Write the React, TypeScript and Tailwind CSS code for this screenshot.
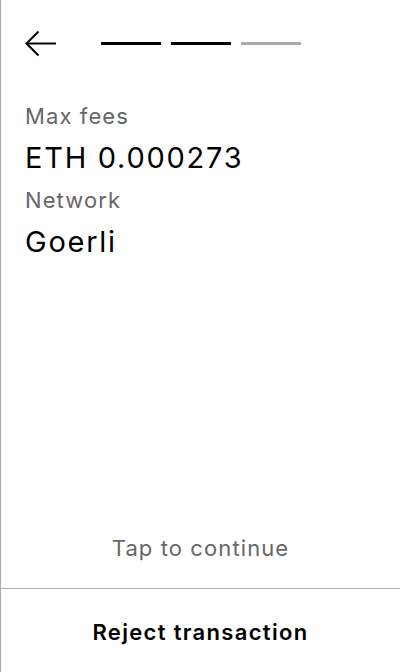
import React from 'react';

const font = { fontFamily: 'Inter, "Noto Sans", sans-serif' };

const Row = ({ label, value }: { label: string; value: string }) => (
  <>
    <div className="text-[22px] leading-[42px] tracking-[0.05em] text-[#666666]">{label}</div>
    <div className="text-[29px] leading-[42px] tracking-[0.06em] text-black">{value}</div>
  </>
);

export default function App() {
  return (
    <div
      className="flex h-[672px] w-[400px] flex-col border-l border-[#aaaaaa] bg-white"
      style={font}
    >
      {/* header: back arrow + step progress */}
      <div className="flex items-center px-6 pt-[30px]">
        <svg width="32" height="27" viewBox="0 0 32 27" fill="none" stroke="black" strokeWidth="2">
          <path d="M31 13.5H1.5" />
          <path d="M13.5 1.5L1.5 13.5L13.5 25.5" />
        </svg>
        <div className="ml-[44px] flex gap-[10px]">
          <div className="h-[3px] w-[60px] bg-black" />
          <div className="h-[3px] w-[60px] bg-black" />
          <div className="h-[3px] w-[60px] bg-[#aaaaaa]" />
        </div>
      </div>

      {/* fee details */}
      <div className="mt-[38px] px-6">
        <Row label="Max fees" value="ETH 0.000273" />
        <Row label="Network" value="Goerli" />
      </div>

      <div className="flex-1" />

      <div className="pb-[19px] text-center text-[22px] leading-[42px] tracking-[0.05em] text-[#666666]">
        Tap to continue
      </div>
      <div className="flex h-[84px] items-center justify-center border-t border-[#aaaaaa] pt-[3px] text-[22px] font-semibold tracking-[0.06em] text-black">
        Reject transaction
      </div>
    </div>
  );
}
